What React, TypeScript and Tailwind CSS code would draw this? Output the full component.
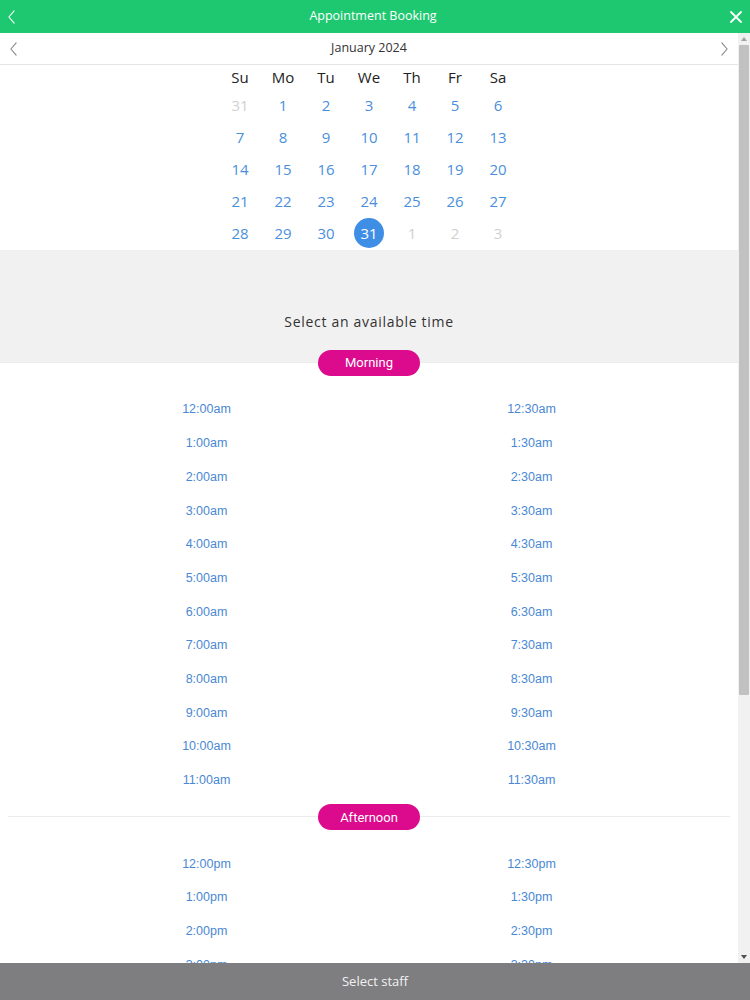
import React from "react";

const days = [
  [31, 1, 2, 3, 4, 5, 6],
  [7, 8, 9, 10, 11, 12, 13],
  [14, 15, 16, 17, 18, 19, 20],
  [21, 22, 23, 24, 25, 26, 27],
  [28, 29, 30, 31, 1, 2, 3],
];

const hours = ["12", "1", "2", "3", "4", "5", "6", "7", "8", "9", "10", "11"];

function Chevron({ dir, className }: { dir: "left" | "right"; className?: string }) {
  return (
    <svg width="10" height="16" viewBox="0 0 10 16" className={className} fill="none">
      <path
        d={dir === "left" ? "M8 1 L2 8 L8 15" : "M2 1 L8 8 L2 15"}
        stroke="currentColor"
        strokeWidth="1.3"
        strokeLinecap="round"
        strokeLinejoin="round"
      />
    </svg>
  );
}

function Pill({ label }: { label: string }) {
  return (
    <div className="flex h-[26px] w-[102px] items-center justify-center rounded-full bg-[#dc0a8c] font-['Roboto',sans-serif] text-[13px] text-white">
      {label}
    </div>
  );
}

function Slots({ suffix }: { suffix: string }) {
  return (
    <div className="mx-auto grid w-[650px] grid-cols-2 pt-[17px] pb-[17px]">
      {hours.map((h) => (
        <React.Fragment key={h}>
          <div className="flex h-[33.7px] items-center justify-center font-['Liberation_Sans',Arial,sans-serif] text-[12.5px] text-[#4a88d4]">
            {h}:00{suffix}
          </div>
          <div className="flex h-[33.7px] items-center justify-center font-['Liberation_Sans',Arial,sans-serif] text-[12.5px] text-[#4a88d4]">
            {h}:30{suffix}
          </div>
        </React.Fragment>
      ))}
    </div>
  );
}

function Scrollbar() {
  return (
    <div className="flex w-[12px] shrink-0 flex-col bg-[#f1f1f1]">
      <div className="flex h-[12px] items-center justify-center">
        <svg width="6" height="4" viewBox="0 0 6 4">
          <path d="M0 4 L3 0 L6 4 Z" fill="#a3a3a3" />
        </svg>
      </div>
      <div className="mx-[1px] h-[650px] rounded-[1px] bg-[#c1c1c1]" />
      <div className="flex-1" />
      <div className="flex h-[12px] items-center justify-center">
        <svg width="6" height="4" viewBox="0 0 6 4">
          <path d="M0 0 L3 4 L6 0 Z" fill="#505050" />
        </svg>
      </div>
    </div>
  );
}

export default function App() {
  return (
    <div className="flex h-[1000px] w-[750px] flex-col bg-white font-['Open_Sans',sans-serif]">
      <header className="flex h-[33px] shrink-0 items-center justify-between bg-[#1ec870] px-[7px] text-white">
        <Chevron dir="left" className="h-[14px] w-[9px]" />
        <span className="text-[12.5px]">Appointment Booking</span>
        <svg width="12" height="12" viewBox="0 0 12 12" className="mr-[1px]">
          <path d="M1 1 L11 11 M11 1 L1 11" stroke="currentColor" strokeWidth="1.8" strokeLinecap="round" />
        </svg>
      </header>

      <div className="flex min-h-0 flex-1">
        <div className="min-w-0 flex-1 overflow-hidden">
          <div className="flex h-[32px] items-center justify-between border-b border-[#e6e6e6] px-[9px] text-[#888]">
            <Chevron dir="left" className="h-[14px] w-[9px]" />
            <span className="text-[12.5px] text-[#333]">January 2024</span>
            <Chevron dir="right" className="h-[14px] w-[9px]" />
          </div>

          <div className="mx-auto w-[301px] pb-[1px]">
            <div className="grid h-[24px] grid-cols-7 items-center text-center text-[15px] text-[#222]">
              {["Su", "Mo", "Tu", "We", "Th", "Fr", "Sa"].map((d) => (
                <span key={d}>{d}</span>
              ))}
            </div>
            {days.map((row, r) => (
              <div key={r} className="grid h-[32px] grid-cols-7 items-center text-center text-[15px]">
                {row.map((d, i) => {
                  const muted = (r === 0 && d > 7) || (r === 4 && d < 7);
                  const selected = r === 4 && d === 31;
                  return (
                    <div key={i} className="flex justify-center">
                      {selected ? (
                        <span className="flex h-[30px] w-[30px] items-center justify-center rounded-full bg-[#3f8ee5] text-white">
                          {d}
                        </span>
                      ) : (
                        <span className={muted ? "text-[#d0d0d0]" : "text-[#4a8fdc]"}>{d}</span>
                      )}
                    </div>
                  );
                })}
              </div>
            ))}
          </div>

          <div className="flex h-[112px] items-end justify-center bg-[#f2f1f2] pb-[30px]">
            <span className="text-[14px] tracking-[0.7px] text-[#333]">Select an available time</span>
          </div>
          <div className="border-t border-[#ececec]" />
          <div className="-mt-[13px] flex justify-center">
            <Pill label="Morning" />
          </div>
          <Slots suffix="am" />

          <div className="mx-2 mt-[2px] border-t border-[#ececec]" />
          <div className="-mt-[13px] flex justify-center">
            <Pill label="Afternoon" />
          </div>
          <Slots suffix="pm" />
        </div>
        <Scrollbar />
      </div>

      <footer className="flex h-[37px] shrink-0 items-center justify-center bg-[#7e7d80] text-[13px] text-[#f2f2f2]">
        Select staff
      </footer>
    </div>
  );
}
